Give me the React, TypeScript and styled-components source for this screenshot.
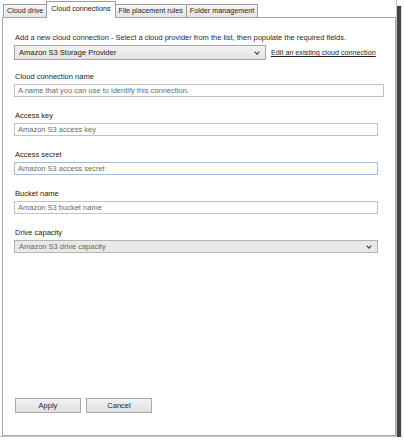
import React from 'react';
import styled, { createGlobalStyle } from 'styled-components';

const GlobalStyle = createGlobalStyle`
  html, body {
    margin: 0;
    padding: 0;
    background: #ffffff;
  }
  body {
    font-family: 'Liberation Sans', Arial, sans-serif;
    font-size: 7.5px;
    color: #2b2b2b;
  }
`;

const tabs = ['Cloud drive', 'Cloud connections', 'File placement rules', 'Folder management'];

const fields = [
  { label: 'Cloud connection name', placeholder: 'A name that you can use to identify this connection.', wide: true },
  { label: 'Access key', placeholder: 'Amazon S3 access key' },
  { label: 'Access secret', placeholder: 'Amazon S3 access secret', focused: true },
  { label: 'Bucket name', placeholder: 'Amazon S3 bucket name' },
];

const Chevron = () => (
  <svg width="6" height="4" viewBox="0 0 6 4">
    <polyline points="0.6,0.6 3,3.2 5.4,0.6" fill="none" stroke="#444" strokeWidth="1.1" />
  </svg>
);

const App: React.FC = () => {
  return (
    <>
      <GlobalStyle />
      <Window>
        <TabBar>
          {tabs.map((t) => (
            <Tab key={t} $active={t === 'Cloud connections'}>{t}</Tab>
          ))}
        </TabBar>
        <Panel>
          <Intro>Add a new cloud connection - Select a cloud provider from the list, then populate the required fields.</Intro>
          <ProviderRow>
            <Select $width={252}>
              <span>Amazon S3 Storage Provider</span>
              <Chevron />
            </Select>
            <EditLink>Edit an existing cloud connection</EditLink>
          </ProviderRow>

          <Form>
            {fields.map((f) => (
              <Group key={f.label}>
                <Label>{f.label}</Label>
                <TextBox $wide={f.wide} $focused={f.focused}>{f.placeholder}</TextBox>
              </Group>
            ))}
            <Group>
              <Label>Drive capacity</Label>
              <Select $width={364} $flat>
                <Placeholder>Amazon S3 drive capacity</Placeholder>
                <Chevron />
              </Select>
            </Group>
          </Form>

          <Buttons>
            <Button>Apply</Button>
            <Button>Cancel</Button>
          </Buttons>
        </Panel>
      </Window>
    </>
  );
};

export default App;

const Window = styled.div`
  width: 397px;
  height: 437px;
  box-sizing: border-box;
  padding: 1px 0 0 2px;
  display: flex;
  flex-direction: column;
  border-right: 1px solid #c4c4c4;
  border-bottom: 1px solid #c4c4c4;
  box-shadow: 5px 5px 1px -1px #444;
  background: #fff;
`;

const TabBar = styled.div`
  display: flex;
  align-items: flex-end;
  height: 16px;
  padding-left: 2px;
`;

const Tab = styled.div<{ $active?: boolean }>`
  position: relative;
  z-index: ${(p) => (p.$active ? 1 : 0)};
  box-sizing: border-box;
  height: ${(p) => (p.$active ? '17px' : '13px')};
  margin-bottom: ${(p) => (p.$active ? '-1px' : '0')};
  padding: ${(p) => (p.$active ? '2px 4px 0' : '1px 3px 0')};
  margin-left: -1px;
  border: 1px solid #9c9c9c;
  border-bottom: none;
  background: ${(p) => (p.$active ? '#ffffff' : 'linear-gradient(#f6f6f6, #e4e4e4)')};
  font-size: 7.2px;
  line-height: 9px;
  white-space: nowrap;
  color: #222;
`;

const Panel = styled.div`
  flex: 1;
  box-sizing: border-box;
  border: 1px solid #a8a8a8;
  background: #fff;
  padding: 15px 11px 22px 11px;
  display: flex;
  flex-direction: column;
`;

const Intro = styled.div`
  line-height: 9px;
  padding-left: 1px;
`;

const ProviderRow = styled.div`
  display: flex;
  align-items: center;
  gap: 5px;
  margin-top: 3px;
`;

const Select = styled.div<{ $width: number; $flat?: boolean }>`
  width: ${(p) => p.$width}px;
  height: ${(p) => (p.$flat ? '13px' : '15px')};
  box-sizing: border-box;
  border: 1px solid ${(p) => (p.$flat ? '#b4b4b4' : '#a6a6a6')};
  background: ${(p) => (p.$flat ? '#e9e9e9' : 'linear-gradient(#f3f3f3, #e3e3e3)')};
  display: flex;
  align-items: center;
  justify-content: space-between;
  padding: 0 5px 0 4px;
  line-height: 9px;
  color: #222;
`;

const Placeholder = styled.span`
  color: #666;
`;

const EditLink = styled.a`
  color: #222;
  font-size: 7.2px;
  text-decoration: underline;
  line-height: 9px;
  white-space: nowrap;
`;

const Form = styled.div`
  display: flex;
  flex-direction: column;
  gap: 14px;
  margin-top: 12px;
`;

const Group = styled.div`
  display: flex;
  flex-direction: column;
  gap: 3px;
`;

const Label = styled.div`
  line-height: 9px;
  padding-left: 1px;
  color: #222;
`;

const TextBox = styled.div<{ $wide?: boolean; $focused?: boolean }>`
  width: ${(p) => (p.$wide ? '370px' : '364px')};
  height: 13px;
  box-sizing: border-box;
  border: 1px solid ${(p) => (p.$focused ? '#9fbedb' : '#c2c2c2')};
  background: #fff;
  padding: 0 3px;
  line-height: 11px;
  color: #6a6a6a;
`;

const Buttons = styled.div`
  margin-top: auto;
  display: flex;
  gap: 5px;
  padding-left: 1px;
`;

const Button = styled.button`
  width: 66px;
  height: 15px;
  box-sizing: border-box;
  padding: 0;
  border: 1px solid #a9a9a9;
  background: linear-gradient(#f1f1f1, #e1e1e1);
  font-family: inherit;
  font-size: 7.5px;
  line-height: 13px;
  color: #222;
`;
